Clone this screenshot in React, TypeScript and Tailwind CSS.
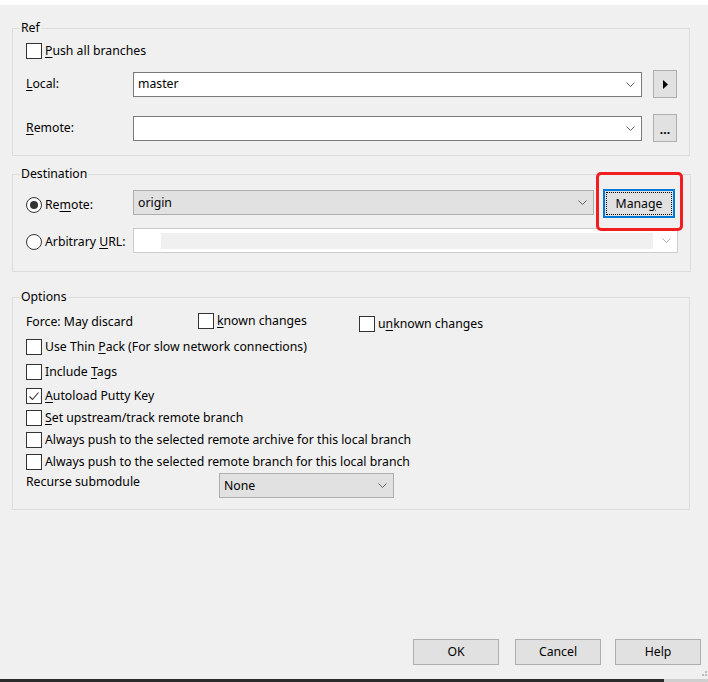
import type { ReactNode } from 'react';

// --- small win32-ish controls ---

function Check({ checked = false }: { checked?: boolean }) {
  return (
    <span className="w-4 h-4 shrink-0 border border-[#333333] bg-white flex items-center justify-center">
      {checked && (
        <svg width="12" height="12" viewBox="0 0 12 12" fill="none">
          <path d="M1.5 6.5L4.5 9.5L10.5 2.5" stroke="#333333" strokeWidth="1.1" />
        </svg>
      )}
    </span>
  );
}

function Radio({ checked = false }: { checked?: boolean }) {
  return (
    <span className="w-4 h-4 shrink-0 rounded-full border border-[#333333] bg-white flex items-center justify-center">
      {checked && <span className="w-2 h-2 rounded-full bg-[#333333]" />}
    </span>
  );
}

function Chevron({ color = '#606060' }: { color?: string }) {
  return (
    <svg width="9" height="5" viewBox="0 0 9 5" fill="none">
      <path d="M0.5 0.5L4.5 4.5L8.5 0.5" stroke={color} strokeWidth="1" />
    </svg>
  );
}

function Combo({ value, width, disabled = false }: { value?: string; width: string; disabled?: boolean }) {
  return (
    <div
      className={`${width} h-[25px] shrink-0 flex items-center justify-between pl-[4px] pr-[6px] border ${
        disabled ? 'bg-[#e1e1e1] border-[#adadad]' : 'bg-white border-[#7a7a7a]'
      }`}
    >
      <span>{value}</span>
      <Chevron />
    </div>
  );
}

function Group({ title, children, className = '' }: { title: string; children: ReactNode; className?: string }) {
  return (
    <fieldset className={`ml-[12px] w-[678px] border border-[#dcdcdc] ${className}`}>
      <legend className="ml-[7px] px-[1px] leading-[16px]">{title}</legend>
      {children}
    </fieldset>
  );
}

function CheckRow({ children, checked, className = '' }: { children: ReactNode; checked?: boolean; className?: string }) {
  return (
    <div className={`h-[16px] flex items-center gap-[3px] ${className}`}>
      <Check checked={checked} />
      <span className="leading-[16px]">{children}</span>
    </div>
  );
}

function DlgButton({ children, className = '' }: { children: ReactNode; className?: string }) {
  return (
    <button className={`w-[86px] h-[26px] bg-[#e1e1e1] border border-[#adadad] flex items-center justify-center ${className}`}>
      {children}
    </button>
  );
}

export default function App() {
  return (
    <div className="relative w-[708px] h-[682px] overflow-hidden bg-[#f0f0f0] flex flex-col text-[12.25px] leading-[16px] text-black font-['Noto_Sans',sans-serif]">
      <div className="h-[5px] bg-white shrink-0" />

      {/* Ref */}
      <Group title="Ref" className="mt-[15px]">
        <div className="pl-[13px] pr-[12px] pt-[7px] pb-[13px]">
          <CheckRow>
            <u className="underline-offset-2">P</u>ush all branches
          </CheckRow>
          <div className="mt-[11px] h-[28px] flex items-center">
            <span className="w-[107px] shrink-0">
              <u className="underline-offset-2">L</u>ocal:
            </span>
            <Combo value="master" width="w-[509px]" />
            <button className="ml-[11px] w-[24px] h-[28px] bg-[#e1e1e1] border border-[#adadad] flex items-center justify-center">
              <svg width="5" height="9" viewBox="0 0 5 9">
                <path d="M0 0L5 4.5L0 9Z" fill="#000" />
              </svg>
            </button>
          </div>
          <div className="mt-[16px] h-[28px] flex items-center">
            <span className="w-[107px] shrink-0">
              <u className="underline-offset-2">R</u>emote:
            </span>
            <Combo width="w-[509px]" />
            <button className="ml-[11px] w-[24px] h-[28px] bg-[#e1e1e1] border border-[#adadad] flex items-center justify-center pt-[4px] font-bold leading-none">
              ...
            </button>
          </div>
        </div>
      </Group>

      {/* Destination */}
      <Group title="Destination" className="mt-[10px]">
        <div className="pl-[13px] pr-[12px] pt-[7px] pb-[18px]">
          <div className="h-[29px] flex items-start">
            <div className="w-[107px] h-[29px] shrink-0 flex items-center gap-[3px] pt-[3px]">
              <Radio checked />
              <span>
                Re<u className="underline-offset-2">m</u>ote:
              </span>
            </div>
            <div className="mt-[1px]">
              <Combo value="origin" width="w-[461px]" disabled />
            </div>
            <button className="ml-[9px] w-[72px] h-[29px] bg-[#e1e1e1] border-2 border-[#0078d7] p-[1px]">
              <span className="w-full h-full flex items-center justify-center border border-dotted border-black">
                Mana<u className="underline-offset-2">g</u>e
              </span>
            </button>
          </div>
          <div className="mt-[10px] h-[25px] flex items-center">
            <div className="w-[107px] shrink-0 flex items-center gap-[3px] pt-[3px]">
              <Radio />
              <span>
                Arbitrary <u className="underline-offset-2">U</u>RL:
              </span>
            </div>
            <div className="w-[545px] h-[25px] bg-white border border-[#cccccc] flex items-center pl-[27px] pr-[6px]">
              <div className="w-[492px] h-[16px] bg-[#f0f0f0]" />
              <div className="ml-auto">
                <Chevron color="#b0b0b0" />
              </div>
            </div>
          </div>
        </div>
      </Group>

      {/* Options */}
      <Group title="Options" className="mt-[17px]">
        <div className="pl-[13px] pr-[12px] pt-[7px] pb-[11px]">
          <div className="h-[20px] flex items-start">
            <span className="w-[172px] shrink-0 mt-[2px]">Force: May discard</span>
            <div className="w-[161px] shrink-0 flex items-center gap-[3px] mt-[1px]">
              <Check />
              <span>
                <u className="underline-offset-2">k</u>nown changes
              </span>
            </div>
            <div className="flex items-center gap-[3px] mt-[4px]">
              <Check />
              <span>
                u<u className="underline-offset-2">n</u>known changes
              </span>
            </div>
          </div>
          <CheckRow className="mt-[7px]">
            Use Thin <u className="underline-offset-2">P</u>ack (For slow network connections)
          </CheckRow>
          <CheckRow className="mt-[9px]">
            Include <u className="underline-offset-2">T</u>ags
          </CheckRow>
          <CheckRow className="mt-[8px]" checked>
            <u className="underline-offset-2">A</u>utoload Putty Key
          </CheckRow>
          <CheckRow className="mt-[6px]">
            <u className="underline-offset-2">S</u>et upstream/track remote branch
          </CheckRow>
          <CheckRow className="mt-[6px]">Always push to the selected remote archive for this local branch</CheckRow>
          <CheckRow className="mt-[6px]">Always push to the selected remote branch for this local branch</CheckRow>
          <div className="mt-[3px] h-[25px] flex items-start">
            <span className="w-[193px] shrink-0 mt-[1px]">Recurse submodule</span>
            <Combo value="None" width="w-[175px]" disabled />
          </div>
        </div>
      </Group>

      {/* dialog buttons */}
      <div className="mt-auto mb-[14px] flex pl-[413px]">
        <DlgButton>OK</DlgButton>
        <DlgButton className="ml-[16px]">Cancel</DlgButton>
        <DlgButton className="ml-[14px]">Help</DlgButton>
      </div>

      {/* taskbar edge */}
      <div className="h-[3px] shrink-0 flex">
        <div className="w-[664px] bg-[#2b2b2b]" />
        <div className="flex-1 bg-[#cfcfcf]" />
      </div>

      {/* resize grip */}
      <svg className="absolute left-[700px] top-[670px]" width="8" height="8" viewBox="0 0 8 8">
        <rect x="5" y="1" width="2" height="2" fill="#bcbcbc" />
        <rect x="2" y="4" width="2" height="2" fill="#bcbcbc" />
        <rect x="5" y="4" width="2" height="2" fill="#bcbcbc" />
      </svg>

      {/* red annotation around Manage */}
      <div className="absolute left-[596px] top-[172px] w-[87px] h-[59px] border-[3px] border-[#f01e1e] rounded-[5px] pointer-events-none" />
    </div>
  );
}
